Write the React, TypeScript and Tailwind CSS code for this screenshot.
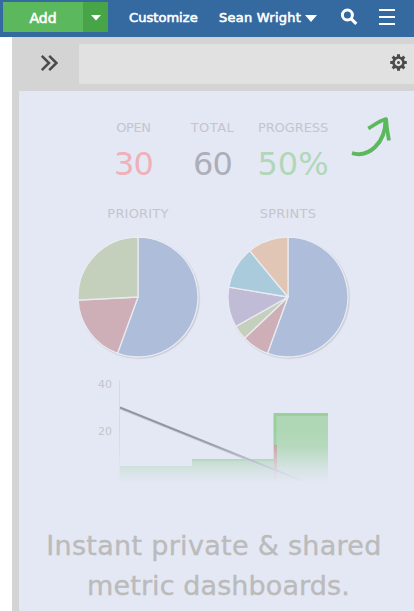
import React from "react";

type Slice = { from: number; to: number; color: string };

const prioritySlices: Slice[] = [
  { from: 0, to: 200, color: "#adbdda" },
  { from: 200, to: 267, color: "#cfafb7" },
  { from: 267, to: 360, color: "#c4d0bc" },
];

const sprintSlices: Slice[] = [
  { from: 0, to: 200, color: "#adbdda" },
  { from: 200, to: 226.5, color: "#cfafb7" },
  { from: 226.5, to: 240.5, color: "#c4d0bc" },
  { from: 240.5, to: 279.5, color: "#c1bcd6" },
  { from: 279.5, to: 320.4, color: "#aacbdc" },
  { from: 320.4, to: 360, color: "#e1c5b5" },
];

function wedge({ from, to }: Slice) {
  const point = (deg: number) => {
    const a = (deg * Math.PI) / 180;
    return `${65 + 60 * Math.sin(a)} ${65 - 60 * Math.cos(a)}`;
  };
  return `M65 65L${point(from)}A60 60 0 ${to - from > 180 ? 1 : 0} 1 ${point(to)}Z`;
}

function Pie({ slices }: { slices: Slice[] }) {
  return (
    <svg width="130" height="130" viewBox="0 0 130 130" className="block">
      <circle cx="66" cy="66" r="61.2" fill="#c9ccd8" opacity=".45" />
      <circle cx="66" cy="66" r="60.4" fill="#c9ccd8" />
      {slices.map((s) => (
        <path key={s.from} d={wedge(s)} fill={s.color} stroke="#e9ebf2" strokeWidth="1.3" strokeLinejoin="round" />
      ))}
    </svg>
  );
}

function Stat({ label, value, className, labelClass }: { label: string; value: string; className: string; labelClass: string }) {
  return (
    <div className="flex flex-col items-center whitespace-nowrap">
      <span className={`h-[16px] text-[13px] leading-[16px] text-[#c3c5cd] ${labelClass}`}>{label}</span>
      <span className={`mt-[8px] h-[40px] text-[32px] leading-[40px] ${className}`}>{value}</span>
    </div>
  );
}

function BurnChart() {
  return (
    <svg width="220" height="116" viewBox="0 0 220 116" className="block">
      <defs>
        <linearGradient id="fade" x1="0" y1="55" x2="0" y2="108" gradientUnits="userSpaceOnUse">
          <stop offset="0" stopColor="#e4e8f4" stopOpacity="0" />
          <stop offset=".3" stopColor="#e4e8f4" stopOpacity=".12" />
          <stop offset=".75" stopColor="#e4e8f4" stopOpacity=".75" />
          <stop offset="1" stopColor="#e4e8f4" />
        </linearGradient>
      </defs>
      <rect x="11" y="5" width="1" height="101" fill="#d7dae4" />
      <rect x="12" y="91" width="72" height="20" fill="#a4d3ab" />
      <rect x="84" y="84" width="82" height="27" fill="#a4d3ab" />
      <rect x="84" y="84" width="82" height="2" fill="#8cc992" />
      <rect x="166" y="38" width="54" height="73" fill="#afd7b5" />
      <path d="M167 111V39.5H220" fill="none" stroke="#9bcf9e" strokeWidth="3" />
      <rect x="166" y="70" width="3" height="41" fill="#c79d9a" />
      <path d="M12 34L198 109" stroke="#c7cbd6" strokeWidth="1" />
      <path d="M12 32.5L198 107.5" stroke="#93969f" strokeWidth="2" />
      <rect x="0" y="55" width="220" height="61" fill="url(#fade)" />
    </svg>
  );
}

export default function App() {
  return (
    <div className="flex h-[611px] w-[414px] flex-col overflow-hidden bg-white font-['DejaVu_Sans',Verdana,sans-serif]">
      <header className="flex h-[37px] shrink-0 items-start bg-[#356aa0] text-white">
        <div className="ml-[3px] mt-[2px] flex h-[30px]">
          <button className="w-[80px] bg-[#5cb85c] text-center text-[14px] leading-[32px] [-webkit-text-stroke:0.6px_white]">Add</button>
          <button className="flex w-[25px] items-center justify-center bg-[#47a447] pt-[2px]" aria-label="More add options">
            <svg width="10" height="6" viewBox="0 0 10 6"><path d="M0 0H10L5 5.5Z" fill="#fff" /></svg>
          </button>
        </div>
        <span className="ml-[21px] w-[90px] whitespace-nowrap text-[13px] leading-[35px] tracking-[0.05px] [-webkit-text-stroke:0.6px_white]">Customize</span>
        <span className="w-[86px] whitespace-nowrap text-[13px] leading-[35px] tracking-[0.25px] [-webkit-text-stroke:0.6px_white]">Sean Wright</span>
        <svg width="12" height="7" viewBox="0 0 12 7" className="mt-[15px]"><path d="M0 0H12L6 7Z" fill="#fff" /></svg>
        <svg width="18" height="18" viewBox="0 0 18 18" className="ml-[23px] mt-[8px]" fill="none" stroke="#fff">
          <circle cx="7.4" cy="7" r="5" strokeWidth="3" />
          <path d="M11 10.6L16.3 15.8" strokeWidth="3.2" />
        </svg>
        <svg width="16" height="16" viewBox="0 0 16 16" className="ml-[21px] mt-[9px]"><path d="M0 1H16M0 8H16M0 15H16" stroke="#fff" strokeWidth="2" /></svg>
      </header>

      <div className="ml-[12px] flex min-h-0 flex-1 flex-col bg-[#d4d4d4]">
        <div className="flex h-[54px] shrink-0 items-center">
          <svg width="18" height="18" viewBox="0 0 18 18" className="ml-[28px] mr-[21px] mt-[-2px]">
            <path d="M1.8 1.8L9 9L1.8 16.2M9.2 1.8L16.4 9L9.2 16.2" fill="none" stroke="#4b4b4b" strokeWidth="2.5" />
          </svg>
          <div className="flex h-[40px] flex-1 items-center justify-end bg-[#e1e1e1] pr-[7px]">
            <svg width="17" height="17" viewBox="-8.5 -8.5 17 17" className="mt-[-4px]" fill="none" stroke="#4b4b4b">
              <circle r="5" strokeWidth="2.6" />
              {[0, 45, 90, 135].map((deg) => (
                <path key={deg} d="M0 -8.3V-5M0 5V8.3" strokeWidth="3" transform={`rotate(${deg})`} />
              ))}
              <circle r="1.5" fill="#4b4b4b" stroke="none" />
            </svg>
          </div>
        </div>

        <main className="ml-[7px] flex-1 bg-[#e4e8f4]">
          <div className="flex pt-[29px]">
            <div className="ml-[75px] w-[79px]"><Stat label="OPEN" value="30" className="text-[#efb0b8] tracking-[-0.8px]" labelClass="tracking-[-0.4px]" /></div>
            <div className="w-[79px]"><Stat label="TOTAL" value="60" className="text-[#acaeb8] tracking-[-0.8px]" labelClass="tracking-[0.5px]" /></div>
            <div className="w-[82px]"><Stat label="PROGRESS" value="50%" className="text-[#b0d7b8]" labelClass="tracking-[-0.1px]" /></div>
            <svg width="41" height="42" viewBox="0 0 41 42" className="ml-[17px] mt-[-4px]" fill="none" stroke="#5cb85c" strokeLinejoin="round">
              <path d="M1 37.2C18 42 34.5 27 34.5 4" strokeWidth="4" />
              <path d="M17.3 12.5C23 9.3 28 5 35 3.2C35.5 10 36.5 17 38 24.5" strokeWidth="3.8" />
            </svg>
          </div>

          <div className="mt-[22px] flex text-[13px] leading-[16px] text-[#c3c5cd]">
            <div className="ml-[54px] flex w-[130px] flex-col items-center gap-[10px]"><span className="tracking-[0.2px]">PRIORITY</span><Pie slices={prioritySlices} /></div>
            <div className="ml-[20px] flex w-[130px] flex-col items-center gap-[10px]"><span className="tracking-[0.2px]">SPRINTS</span><Pie slices={sprintSlices} /></div>
          </div>

          <div className="ml-[79px] mt-[13px] flex">
            <div className="w-[10px] whitespace-nowrap text-[11px] leading-[14px] text-[#c3c5cd]">
              <div className="mt-[3px]">40</div>
              <div className="mt-[33px]">20</div>
            </div>
            <BurnChart />
          </div>

          <p className="mt-[35px] whitespace-nowrap pr-[5px] text-center text-[27px] leading-[40px] text-[#bbbbbb] [-webkit-text-stroke:0.4px_#bbbbbb]">
            <span className="block tracking-[0.3px]">Instant private &amp; shared</span>
            <span className="block pl-[9px] tracking-[0.1px]">metric dashboards.</span>
          </p>
        </main>
      </div>
    </div>
  );
}
